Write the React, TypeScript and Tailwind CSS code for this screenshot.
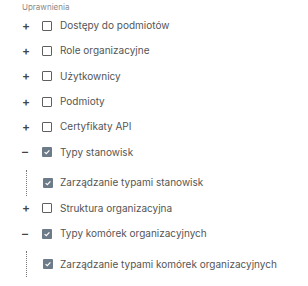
import { Fragment } from "react";

type Perm = {
  label: string;
  checked: boolean;
  children?: string[];
};

const perms: Perm[] = [
  { label: "Dostępy do podmiotów", checked: false },
  { label: "Role organizacyjne", checked: false },
  { label: "Użytkownicy", checked: false },
  { label: "Podmioty", checked: false },
  { label: "Certyfikaty API", checked: false },
  { label: "Typy stanowisk", checked: true, children: ["Zarządzanie typami stanowisk"] },
  { label: "Struktura organizacyjna", checked: false },
  {
    label: "Typy komórek organizacyjnych",
    checked: true,
    children: ["Zarządzanie typami komórek organizacyjnych"],
  },
];

function Box({ checked }: { checked: boolean }) {
  if (checked) {
    return (
      <span className="flex h-[10px] w-[10px] shrink-0 items-center justify-center rounded-[1px] bg-[#6d7b89]">
        <svg viewBox="0 0 10 10" className="h-[8px] w-[8px]">
          <path d="M2 5.2 L4.1 7.2 L8 3" fill="none" stroke="#fff" strokeWidth="1.5" />
        </svg>
      </span>
    );
  }
  return <span className="h-[10px] w-[10px] shrink-0 rounded-[1px] border-[1.3px] border-[#5f5f5f]" />;
}

export default function App() {
  return (
    <div className="h-[286px] w-[308px] overflow-hidden bg-white font-['Inter',sans-serif] text-[#555]">
      <div className="flex flex-col pl-[22px] pt-[2px]">
        <span className="text-[8px] leading-[11px] text-[#8a8a8a]">Uprawnienia</span>
        {perms.map((p) => (
          <Fragment key={p.label}>
            <div className="flex h-[25.3px] items-center">
              <span className="w-[20px] text-[12px] font-semibold leading-none text-[#444]">
                {p.children ? "–" : "+"}
              </span>
              <Box checked={p.checked} />
              <span className="ml-[8px] text-[10px]">{p.label}</span>
            </div>
            {p.children?.map((c) => (
              <div
                key={c}
                className="ml-[4px] mt-[5px] flex h-[26px] items-center border-l border-dotted border-[#777] pl-[16px]"
              >
                <Box checked />
                <span className="ml-[7px] text-[10px]">{c}</span>
              </div>
            ))}
          </Fragment>
        ))}
      </div>
    </div>
  );
}
